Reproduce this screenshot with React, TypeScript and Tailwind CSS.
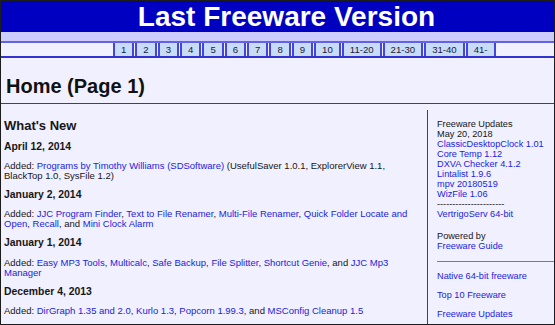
const tabs = ['1', '2', '3', '4', '5', '6', '7', '8', '9', '10', '11-20', '21-30', '31-40', '41-']

const updates = [
  'ClassicDesktopClock 1.01',
  'Core Temp 1.12',
  'DXVA Checker 4.1.2',
  'Lintalist 1.9.6',
  'mpv 20180519',
  'WizFile 1.06',
]

function A({ children }: { children: React.ReactNode }) {
  return <a className="text-[#2323dc] no-underline cursor-pointer">{children}</a>
}

function DateHead({ children }: { children: React.ReactNode }) {
  return <p className="mt-[8.5px] text-[10.4px] font-bold leading-[10.3px]">{children}</p>
}

function Added({ children }: { children: React.ReactNode }) {
  return <p className="mt-[9px] text-[9.5px] leading-[10.3px] whitespace-nowrap">{children}</p>
}

export default function App() {
  return (
    <div className="w-[555px] h-[325px] overflow-hidden border border-[#1c1c1c] bg-[#f0f0ff] font-['Liberation_Sans',Arial,sans-serif] text-[9.2px] text-[#161616]">
      <header className="h-[31px] bg-[#0000c0] flex justify-center pl-[18px] text-white text-[28px] font-bold leading-[31px]">
        Last Freeware Version
      </header>
      <div className="h-[9px] bg-[#ccccff]" />

      {/* page tabs */}
      <nav className="h-[17px] border-t-2 border-b-2 border-t-[#6262e2] border-b-[#3232d2] flex pl-[112px] gap-px">
        {tabs.map((t) => (
          <a
            key={t}
            className="h-full border-x-2 border-[#4545dc] bg-[#c8dcf8] px-[6px] text-[9.6px] leading-[13px] text-[#1a1a3a] cursor-pointer"
          >
            {t}
          </a>
        ))}
      </nav>

      <div className="h-[46px] flex items-end pb-[6px] pl-[5px] border-b border-[#3333cc]">
        <h1 className="text-[20px] font-bold leading-[22px] text-[#111]">Home (Page 1)</h1>
      </div>

      <div className="flex">
        <main className="w-[426px] pl-[3px]">
          <h2 className="mt-[14px] text-[13px] font-bold leading-[15px]">What's New</h2>

          <DateHead>April 12, 2014</DateHead>
          <Added>
            Added: <A>Programs by Timothy Williams (SDSoftware)</A> (UsefulSaver 1.0.1, ExplorerView 1.1,
            <br />
            BlackTop 1.0, SysFile 1.2)
          </Added>

          <DateHead>January 2, 2014</DateHead>
          <Added>
            Added: <A>JJC Program Finder</A>, <A>Text to File Renamer</A>, <A>Multi-File Renamer</A>,{' '}
            <A>
              Quick Folder Locate and
              <br />
              Open
            </A>
            , <A>Recall</A>, and <A>Mini Clock Alarm</A>
          </Added>

          <DateHead>January 1, 2014</DateHead>
          <Added>
            Added: <A>Easy MP3 Tools</A>, <A>Multicalc</A>, <A>Safe Backup</A>, <A>File Splitter</A>,{' '}
            <A>Shortcut Genie</A>, and{' '}
            <A>
              JJC Mp3
              <br />
              Manager
            </A>
          </Added>

          <DateHead>December 4, 2013</DateHead>
          <Added>
            Added: <A>DirGraph 1.35 and 2.0</A>, <A>Kurlo 1.3</A>, <A>Popcorn 1.99.3</A>, and{' '}
            <A>MSConfig Cleanup 1.5</A>
          </Added>
        </main>

        <aside className="flex-1 mt-[6px] border-l border-[#3333cc] pl-[9px] pt-[9.3px] leading-[10px] h-[220px]">
          <p>Freeware Updates</p>
          <p>May 20, 2018</p>
          {updates.map((u) => (
            <p key={u}>
              <A>{u}</A>
            </p>
          ))}
          <p>----------------------</p>
          <p>
            <A>VertrigoServ 64-bit</A>
          </p>

          <p className="mt-[12px]">Powered by</p>
          <p>
            <A>Freeware Guide</A>
          </p>

          <div className="mt-[9.4px] h-px bg-[#6f6fe6]" />

          <p className="mt-[9px]">
            <A>Native 64-bit freeware</A>
          </p>
          <p className="mt-[9px]">
            <A>Top 10 Freeware</A>
          </p>
          <p className="mt-[9.4px]">
            <A>Freeware Updates</A>
          </p>
        </aside>
      </div>
    </div>
  )
}
